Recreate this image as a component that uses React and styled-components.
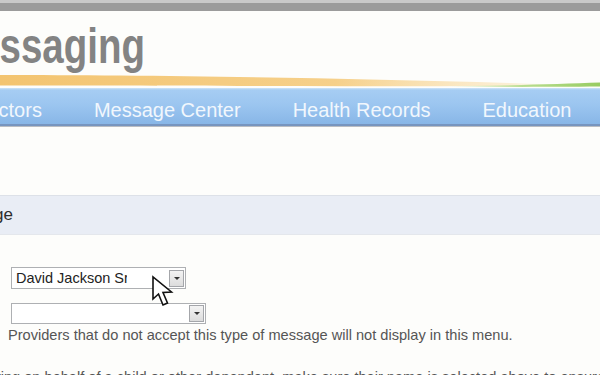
import { createGlobalStyle } from 'styled-components';
import styled from 'styled-components';

// Global page styles:
const GlobalStyle = createGlobalStyle`
   html, body {
      margin: 0;
      padding: 0;
      width: 600px;
      height: 375px;
      overflow: hidden;
      background: #fdfdfb;
      font-family: "Liberation Sans", Arial, sans-serif;
   }
`;

// Page wrapper:
const Page = styled.div`
   width: 600px;
   height: 375px;
   overflow: hidden;
   position: relative;
`;

// Browser chrome strip on top:
const TopBar = styled.div`
   height: 8px;
   background: #9b9b9b;
   border-top: 3px solid #c9c9c9;
`;

// Header with the site title:
const Header = styled.header`
   padding-top: 20px;
   height: 57px;
   display: flex;
   flex-direction: column;
`;

const Title = styled.h1`
   margin: 0 0 0 -54px;
   font-size: 38.5px;
   line-height: 38px;
   height: 38px;
   font-weight: bold;
   color: #838383;
   transform: scaleY(1.3);
   transform-origin: 0 32px;
   white-space: nowrap;
`;

const Swoosh = styled.svg`
   display: block;
   width: 600px;
   height: 19px;
`;

// Main navigation:
const Nav = styled.nav`
   height: 38px;
   padding-top: 11px;
   box-sizing: border-box;
   background: linear-gradient(
      to bottom,
      #cfe4f8 0px,
      #a6cdf3 2px,
      #9cc6f0 45%,
      #88b6e7 100%
   );
   border-bottom: 2px solid #7795bf;
   box-shadow: 0 1px 0 #b9bcc2;
   display: flex;
   gap: 52px;
`;

const NavItem = styled.a`
   font-size: 20px;
   line-height: 22px;
   color: #f1f7fd;
   text-decoration: none;
   white-space: nowrap;
   margin-left: ${({ $offset }) => $offset || 0}px;
`;

// Section heading band:
const SectionHead = styled.div`
   margin-top: 69px;
   height: 40px;
   background: #e9edf5;
   border-top: 1px solid #dde1e8;
   border-bottom: 1px solid #e4e7ec;
   box-sizing: border-box;
`;

const SectionTitle = styled.h2`
   margin: 0 0 0 -56px;
   font-size: 17px;
   font-weight: normal;
   line-height: 38px;
   color: #2e2e2e;
   white-space: nowrap;
`;

// Form body:
const Form = styled.div`
   padding: 32px 0 0 8px;
   display: flex;
   flex-direction: column;
`;

const Select = styled.div`
   margin-left: 3px;
   width: ${({ $width }) => $width}px;
   height: ${({ $height }) => $height}px;
   box-sizing: border-box;
   border: 1px solid #aeb0b3;
   background: #ffffff;
   display: flex;
   align-items: center;
   justify-content: space-between;
   margin-bottom: ${({ $gap }) => $gap || 0}px;
`;

const SelectValue = styled.span`
   font-size: 14.5px;
   color: #232323;
   padding-left: 4px;
   max-width: 111px;
   overflow: hidden;
   white-space: nowrap;
`;

const DropButton = styled.span`
   width: 15px;
   height: 17px;
   margin-right: 1px;
   box-sizing: border-box;
   border: 1px solid #a4a6aa;
   background: linear-gradient(to bottom, #f3f3f3, #dcdcdc);
   display: flex;
   align-items: center;
   justify-content: center;

   &::after {
      content: '';
      border-left: 3px solid transparent;
      border-right: 3px solid transparent;
      border-top: 3px solid #333;
   }
`;

const Hint = styled.p`
   margin: 3px 0 0 0;
   font-size: 14.6px;
   line-height: 17px;
   color: #555;
   white-space: nowrap;
`;

const Note = styled.p`
   margin: 25px 0 0 -30px;
   font-size: 14.6px;
   line-height: 17px;
   color: #555;
   white-space: nowrap;
`;

// Mouse pointer overlay:
const Cursor = styled.svg`
   position: absolute;
   left: 152px;
   top: 276px;
   width: 26px;
   height: 34px;
   overflow: visible;
`;

const App = () => {
   return (
      <Page>
         <GlobalStyle />
         <TopBar />
         <Header>
            <Title>Messaging</Title>
            <Swoosh viewBox="0 0 600 19">
               <defs>
                  <linearGradient id="orange" x1="0" x2="1" y1="0" y2="0">
                     <stop offset="0" stopColor="#f3c470" />
                     <stop offset="0.6" stopColor="#f6d08a" />
                     <stop offset="0.92" stopColor="#fbe6bd" stopOpacity="0.6" />
                     <stop offset="1" stopColor="#fdf3df" stopOpacity="0" />
                  </linearGradient>
                  <linearGradient id="green" x1="0" x2="1" y1="0" y2="0">
                     <stop offset="0" stopColor="#c9e6a8" stopOpacity="0" />
                     <stop offset="0.5" stopColor="#b7dd8e" />
                     <stop offset="1" stopColor="#98cc62" />
                  </linearGradient>
               </defs>
               <path
                  d="M0 6 C150 6 360 9 560 15.5 L560 17 C360 17.5 150 16.5 0 16.5 Z"
                  fill="url(#orange)"
               />
               <path
                  d="M450 17 C510 16.5 560 15 600 13.5 L600 17.5 C560 17.8 510 18 450 18 Z"
                  fill="url(#green)"
               />
            </Swoosh>
         </Header>
         <Nav>
            <NavItem $offset={-27}>Doctors</NavItem>
            <NavItem>Message Center</NavItem>
            <NavItem>Health Records</NavItem>
            <NavItem>Education</NavItem>
         </Nav>
         <SectionHead>
            <SectionTitle>Message</SectionTitle>
         </SectionHead>
         <Form>
            <Select $width={175} $height={22} $gap={14}>
               <SelectValue>David Jackson Sr.</SelectValue>
               <DropButton />
            </Select>
            <Select $width={195} $height={21}>
               <SelectValue />
               <DropButton />
            </Select>
            <Hint>
               Providers that do not accept this type of message will not
               display in this menu.
            </Hint>
            <Note>
               writing on behalf of a child or other dependent, make sure their
               name is selected above to ensure it is filed correctly.
            </Note>
         </Form>
         <Cursor viewBox="0 0 26 34">
            <path
               d="M1 1 L1 23 L6.5 18 L11 29 L15.5 27 L11 16.5 L19.5 16 Z"
               fill="#ffffff"
               stroke="#111"
               strokeWidth="1.6"
               strokeLinejoin="miter"
            />
         </Cursor>
      </Page>
   );
};

export default App;
